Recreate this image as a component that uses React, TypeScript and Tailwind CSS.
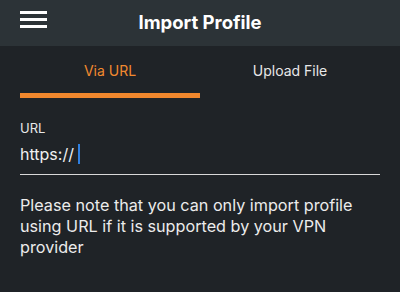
export default function App() {
  return (
    <div className="w-[400px] h-[292px] bg-[#1f2327] text-white overflow-hidden" style={{ fontFamily: "Inter, 'Noto Sans', sans-serif" }}>
      <div className="h-[46px] bg-[#2c3337] flex items-center relative">
        <div className="absolute left-[20px] top-[11px] flex flex-col gap-[4px]">
          <div className="w-[27px] h-[3px] bg-white" />
          <div className="w-[27px] h-[3px] bg-white" />
          <div className="w-[27px] h-[3px] bg-white" />
        </div>
        <div className="w-full text-center text-[18.5px] font-bold">Import Profile</div>
      </div>
      <div className="px-[20px]">
        <div className="flex h-[47px] relative">
          <div className="w-[180px] flex justify-center pt-[14px] text-[14px] text-[#f0892f]">Via URL</div>
          <div className="flex-1 flex justify-center pt-[14px] text-[14px] text-[#e8e8e8]">Upload File</div>
          <div className="absolute left-0 top-[47px] w-[180px] h-[5px] bg-[#f0872d]" />
        </div>
        <div className="pt-[27px] text-[13px] leading-[16px] text-[#e8e8e8]">URL</div>
        <div className="mt-[8px] flex items-center text-[16px] leading-[20px] text-[#f0f0f0] pb-[10px] border-b-[1.5px] border-[#d8d8d8]">
          https://
          <span className="ml-[4px] w-[2px] h-[20px] bg-[#2f7fe0]" />
        </div>
        <p className="mt-[20px] text-[16.2px] leading-[21px] text-[#ececec]">
          Please note that you can only import profile using URL if it is supported by your VPN provider
        </p>
      </div>
    </div>
  );
}
